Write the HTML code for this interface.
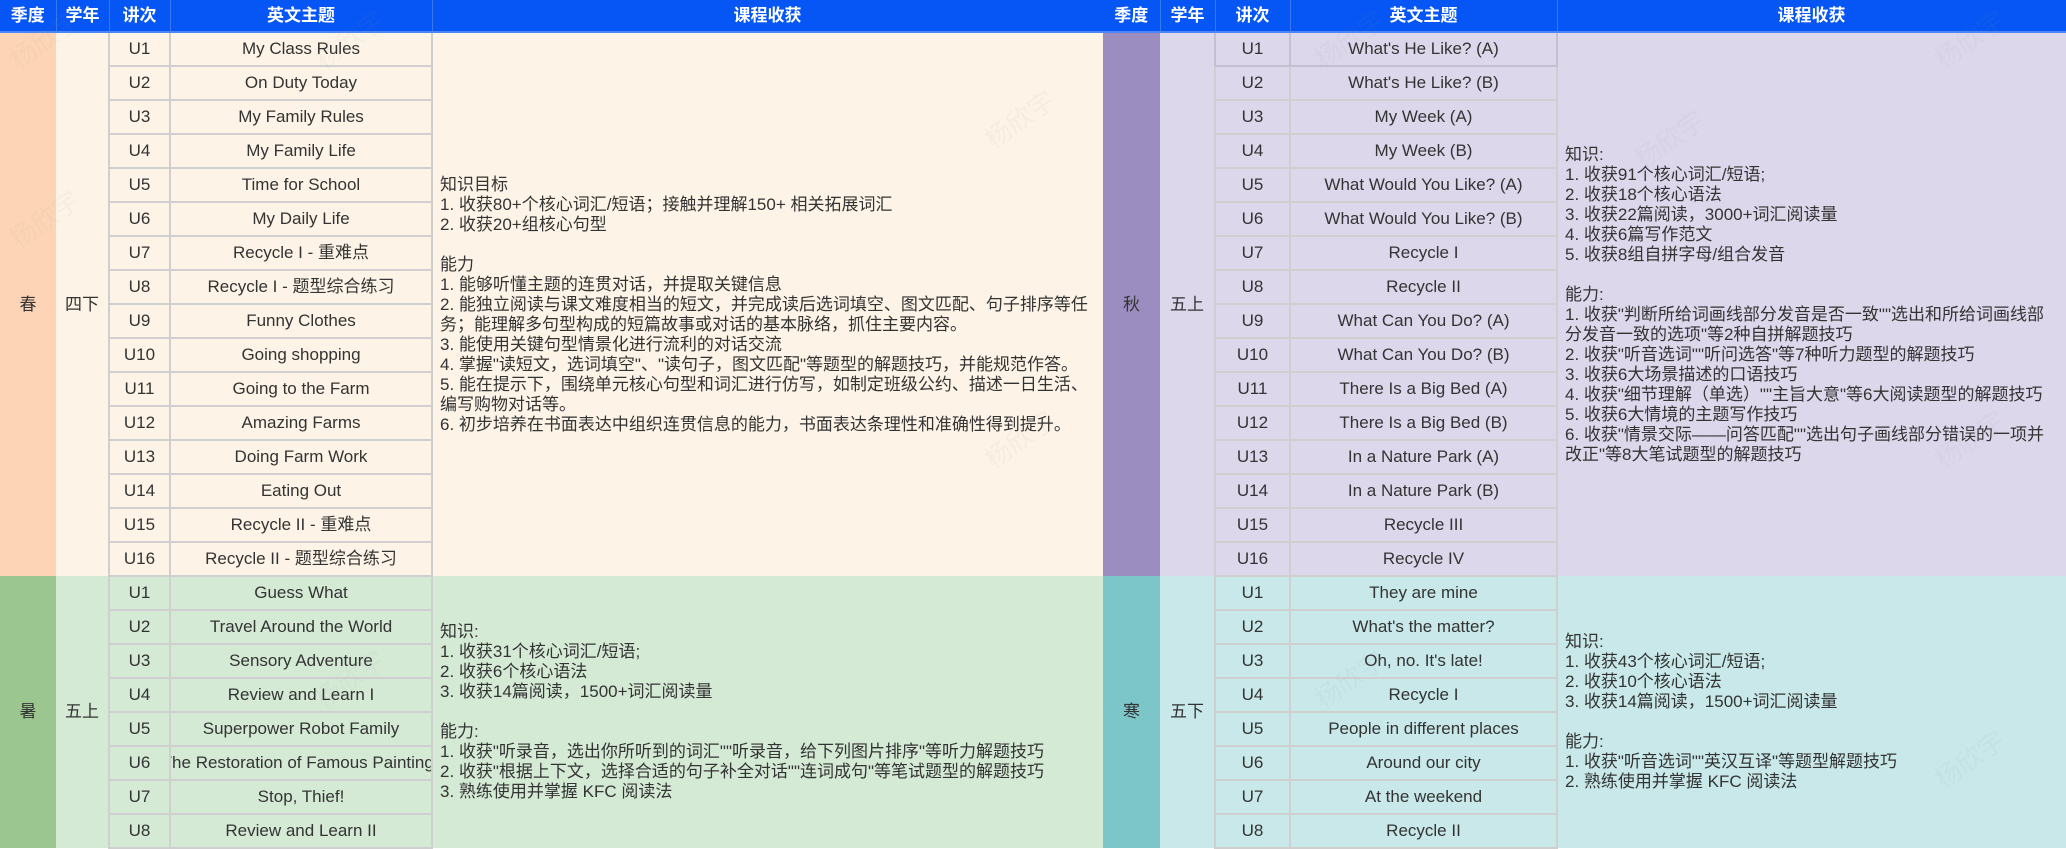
<!DOCTYPE html>
<html><head><meta charset="utf-8"><style>
*{margin:0;padding:0;box-sizing:border-box}
body{width:2066px;height:846px;overflow:hidden;background:#fff;font-family:"Liberation Sans","Noto Sans CJK SC",sans-serif;font-size:17px;color:#333;position:relative}
table{position:absolute;top:0;border-collapse:collapse;table-layout:fixed}
td,th{overflow:hidden;white-space:nowrap;text-align:center;padding:0;vertical-align:middle;line-height:20px}
th{background:#0556f4;color:#fff;font-weight:bold;height:32px;border-right:1px solid #3a78f0;border-bottom:2px solid #4a86f5}
td.u,td.t{border:2px solid #cfcfcf;height:34px}
.o{text-align:left;white-space:pre;line-height:20px;padding-left:7px;vertical-align:middle}
.wm{position:absolute;color:rgba(150,150,150,0.07);font-size:26px;transform:rotate(-35deg);pointer-events:none}
</style></head><body>

<table style="left:0;width:1103px">
<colgroup><col style="width:56px"><col style="width:53px"><col style="width:61px"><col style="width:262px"><col style="width:671px"></colgroup>
<tr><th>季度</th><th>学年</th><th>讲次</th><th>英文主题</th><th>课程收获</th></tr>
<tbody style="background:#fdf4e7">
<tr><td rowspan="16" style="background:#fdd4b5">春</td><td rowspan="16">四下</td><td class="u">U1</td><td class="t">My Class Rules</td><td rowspan="16" class="o">知识目标
1. 收获80+个核心词汇/短语；接触并理解150+ 相关拓展词汇
2. 收获20+组核心句型

能力
1. 能够听懂主题的连贯对话，并提取关键信息
2. 能独立阅读与课文难度相当的短文，并完成读后选词填空、图文匹配、句子排序等任
务；能理解多句型构成的短篇故事或对话的基本脉络，抓住主要内容。
3. 能使用关键句型情景化进行流利的对话交流
4. 掌握"读短文，选词填空"、"读句子，图文匹配"等题型的解题技巧，并能规范作答。
5. 能在提示下，围绕单元核心句型和词汇进行仿写，如制定班级公约、描述一日生活、
编写购物对话等。
6. 初步培养在书面表达中组织连贯信息的能力，书面表达条理性和准确性得到提升。</td></tr>
<tr><td class="u">U2</td><td class="t">On Duty Today</td></tr>
<tr><td class="u">U3</td><td class="t">My Family Rules</td></tr>
<tr><td class="u">U4</td><td class="t">My Family Life</td></tr>
<tr><td class="u">U5</td><td class="t">Time for School</td></tr>
<tr><td class="u">U6</td><td class="t">My Daily Life</td></tr>
<tr><td class="u">U7</td><td class="t">Recycle I - 重难点</td></tr>
<tr><td class="u">U8</td><td class="t">Recycle I - 题型综合练习</td></tr>
<tr><td class="u">U9</td><td class="t">Funny Clothes</td></tr>
<tr><td class="u">U10</td><td class="t">Going shopping</td></tr>
<tr><td class="u">U11</td><td class="t">Going to the Farm</td></tr>
<tr><td class="u">U12</td><td class="t">Amazing Farms</td></tr>
<tr><td class="u">U13</td><td class="t">Doing Farm Work</td></tr>
<tr><td class="u">U14</td><td class="t">Eating Out</td></tr>
<tr><td class="u">U15</td><td class="t">Recycle II - 重难点</td></tr>
<tr><td class="u">U16</td><td class="t">Recycle II - 题型综合练习</td></tr>
</tbody>
<tbody style="background:#d4ead5">
<tr><td rowspan="8" style="background:#9cc68f">暑</td><td rowspan="8">五上</td><td class="u">U1</td><td class="t">Guess What</td><td rowspan="8" class="o">知识:
1. 收获31个核心词汇/短语;
2. 收获6个核心语法
3. 收获14篇阅读，1500+词汇阅读量

能力:
1. 收获"听录音，选出你所听到的词汇""听录音，给下列图片排序"等听力解题技巧
2. 收获"根据上下文，选择合适的句子补全对话""连词成句"等笔试题型的解题技巧
3. 熟练使用并掌握 KFC 阅读法</td></tr>
<tr><td class="u">U2</td><td class="t">Travel Around the World</td></tr>
<tr><td class="u">U3</td><td class="t">Sensory Adventure</td></tr>
<tr><td class="u">U4</td><td class="t">Review and Learn I</td></tr>
<tr><td class="u">U5</td><td class="t">Superpower Robot Family</td></tr>
<tr><td class="u">U6</td><td class="t"><div style="width:300px;margin-left:-19px">The Restoration of Famous Paintings</div></td></tr>
<tr><td class="u">U7</td><td class="t">Stop, Thief!</td></tr>
<tr><td class="u">U8</td><td class="t">Review and Learn II</td></tr>
</tbody>
</table>

<table style="left:1103px;width:963px">
<colgroup><col style="width:57px"><col style="width:55px"><col style="width:75px"><col style="width:267px"><col style="width:509px"></colgroup>
<tr><th>季度</th><th>学年</th><th>讲次</th><th>英文主题</th><th>课程收获</th></tr>
<tbody style="background:#dcd7eb">
<tr><td rowspan="16" style="background:#9c8dc1">秋</td><td rowspan="16">五上</td><td class="u" style="border-color:#c4bfd3">U1</td><td class="t" style="border-color:#c4bfd3">What's He Like? (A)</td><td rowspan="16" class="o">知识:
1. 收获91个核心词汇/短语;
2. 收获18个核心语法
3. 收获22篇阅读，3000+词汇阅读量
4. 收获6篇写作范文
5. 收获8组自拼字母/组合发音

能力:
1. 收获"判断所给词画线部分发音是否一致""选出和所给词画线部
分发音一致的选项"等2种自拼解题技巧
2. 收获"听音选词""听问选答"等7种听力题型的解题技巧
3. 收获6大场景描述的口语技巧
4. 收获"细节理解（单选）""主旨大意"等6大阅读题型的解题技巧
5. 收获6大情境的主题写作技巧
6. 收获"情景交际——问答匹配""选出句子画线部分错误的一项并
改正"等8大笔试题型的解题技巧</td></tr>
<tr><td class="u">U2</td><td class="t">What's He Like? (B)</td></tr>
<tr><td class="u">U3</td><td class="t">My Week (A)</td></tr>
<tr><td class="u">U4</td><td class="t">My Week (B)</td></tr>
<tr><td class="u">U5</td><td class="t">What Would You Like? (A)</td></tr>
<tr><td class="u">U6</td><td class="t">What Would You Like? (B)</td></tr>
<tr><td class="u">U7</td><td class="t">Recycle I</td></tr>
<tr><td class="u">U8</td><td class="t">Recycle II</td></tr>
<tr><td class="u">U9</td><td class="t">What Can You Do? (A)</td></tr>
<tr><td class="u">U10</td><td class="t">What Can You Do? (B)</td></tr>
<tr><td class="u">U11</td><td class="t">There Is a Big Bed (A)</td></tr>
<tr><td class="u">U12</td><td class="t">There Is a Big Bed (B)</td></tr>
<tr><td class="u">U13</td><td class="t">In a Nature Park (A)</td></tr>
<tr><td class="u">U14</td><td class="t">In a Nature Park (B)</td></tr>
<tr><td class="u">U15</td><td class="t">Recycle III</td></tr>
<tr><td class="u">U16</td><td class="t">Recycle IV</td></tr>
</tbody>
<tbody style="background:#c8e8ea">
<tr><td rowspan="8" style="background:#7cc6ca">寒</td><td rowspan="8">五下</td><td class="u">U1</td><td class="t">They are mine</td><td rowspan="8" class="o">知识:
1. 收获43个核心词汇/短语;
2. 收获10个核心语法
3. 收获14篇阅读，1500+词汇阅读量

能力:
1. 收获"听音选词""英汉互译"等题型解题技巧
2. 熟练使用并掌握 KFC 阅读法</td></tr>
<tr><td class="u">U2</td><td class="t">What's the matter?</td></tr>
<tr><td class="u">U3</td><td class="t">Oh, no. It's late!</td></tr>
<tr><td class="u">U4</td><td class="t">Recycle I</td></tr>
<tr><td class="u">U5</td><td class="t">People in different places</td></tr>
<tr><td class="u">U6</td><td class="t">Around our city</td></tr>
<tr><td class="u">U7</td><td class="t">At the weekend</td></tr>
<tr><td class="u">U8</td><td class="t">Recycle II</td></tr>
</tbody>
</table>

<div class="wm" style="left:5px;top:20px">杨欣宇</div>
<div class="wm" style="left:310px;top:20px">杨欣宇</div>
<div class="wm" style="left:980px;top:100px">杨欣宇</div>
<div class="wm" style="left:1310px;top:20px">杨欣宇</div>
<div class="wm" style="left:1930px;top:20px">杨欣宇</div>
<div class="wm" style="left:5px;top:200px">杨欣宇</div>
<div class="wm" style="left:980px;top:420px">杨欣宇</div>
<div class="wm" style="left:1630px;top:120px">杨欣宇</div>
<div class="wm" style="left:1930px;top:420px">杨欣宇</div>
<div class="wm" style="left:310px;top:660px">杨欣宇</div>
<div class="wm" style="left:1310px;top:660px">杨欣宇</div>
<div class="wm" style="left:1930px;top:740px">杨欣宇</div>
</body></html>
